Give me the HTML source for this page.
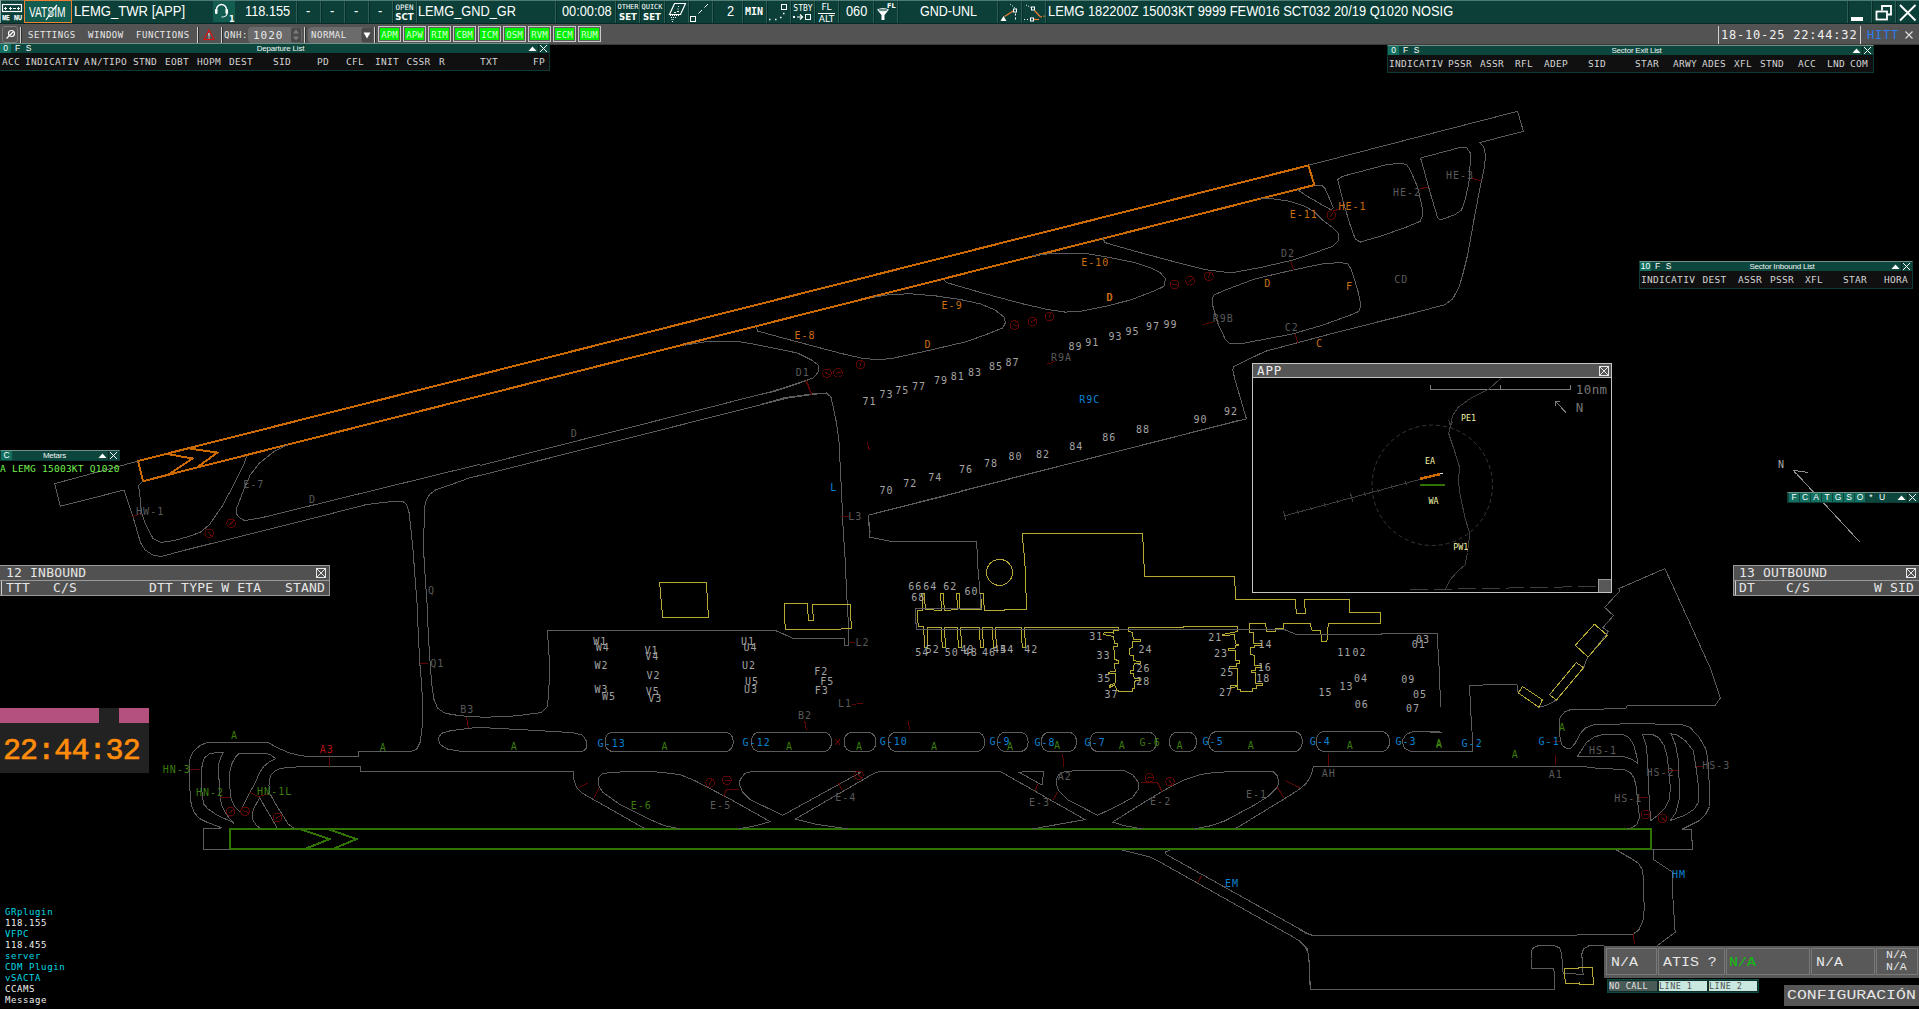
<!DOCTYPE html>
<html lang="es">
<head>
<meta charset="utf-8">
<title>LEMG_TWR</title>
<style>
*{box-sizing:border-box;margin:0;padding:0}
html,body{width:1919px;height:1009px;overflow:hidden;background:#000}
body{position:relative;font-family:"Liberation Sans",sans-serif;color:#fff}
.abs{position:absolute}
.mono{font-family:"DejaVu Sans Mono","Liberation Mono",monospace}
.lmono{font-family:"Liberation Mono",monospace}
#map{position:absolute;left:0;top:0;width:1919px;height:1009px}
#map text{font-family:"DejaVu Sans Mono","Liberation Mono",monospace;font-size:10px;letter-spacing:1px}
/* top bar */
#top{position:absolute;left:0;top:0;width:1919px;height:24px;background:#0b3f38;border-top:1px solid #4d7a72;border-bottom:1px solid #062a25}
#top .sep{position:absolute;top:0;width:2px;height:22px;border-left:1px solid #2c5f56;border-right:1px solid #072e29}
#top .t{position:absolute;top:1px;height:19px;line-height:19px;font-size:14px;transform-origin:0 50%;transform:scaleX(0.912);color:#fff;white-space:nowrap}
#top .s2{position:absolute;font-size:7.5px;line-height:9px;color:#fff;text-align:center;white-space:nowrap;font-family:"DejaVu Sans Mono",monospace}
#top .s2 b{font-family:"DejaVu Sans",sans-serif;font-size:8.6px;line-height:11px;display:block}
/* grey bar */
#bar{position:absolute;left:0;top:24px;width:1919px;height:21px;background:#535353;border-bottom:1px solid #3a3a3a}
#bar .m{position:absolute;top:5px;font-size:9px;line-height:13px;color:#e8e8e8;white-space:nowrap;letter-spacing:0.55px}
#bar .vs{position:absolute;top:3px;width:2px;height:16px;border-left:1px solid #d0d0d0;border-right:1px solid #2e2e2e}
.gb{position:absolute;top:2px;width:23px;height:16px;border:1px solid #c8c8c8;background:#606060;padding:1px}
.gb span{display:block;width:19px;height:12px;background:#00f000;color:#d8ffd8;font-size:9px;line-height:14px;text-align:center;font-family:"DejaVu Sans Mono",monospace}
/* list panels */
.lst{position:absolute;background:#101010;border:1px solid #0b3b34;border-top-color:#6f918a}
.lst .tb{position:absolute;left:0;top:0;right:0;height:9px;background:#0c463c}
.lst .tb i{position:absolute;top:0;font-style:normal;font-size:8.5px;line-height:9px;color:#fff;text-align:center;height:9px}
.lst .tb .ttl{left:34px;right:22px;text-align:center;font-size:8px;letter-spacing:-0.2px;color:#eef6f4}
.lst .hd{position:absolute;left:0;right:0;top:10px;height:15px;font-size:9.5px;letter-spacing:0.3px;line-height:15px;color:#d4d4d4;white-space:pre}
.lst .hd span{position:absolute;top:0}
.pnl{position:absolute;background:#515151;color:#e6e6e6;font-size:13px;letter-spacing:0.2px;white-space:pre}
</style>
</head>
<body>
<svg id="map" width="1919" height="1009" viewBox="0 0 1919 1009" shape-rendering="crispEdges" fill="none">
<polygon points="138,461 1308.3,165.5 1314.5,185 143,481.2" stroke="#cc6a00" stroke-width="2"/>
<polyline points="167.7,454.1 192.5,458.5 168.4,474.5" stroke="#cc6a00" stroke-width="2"/>
<polyline points="190.3,448.7 217.3,452.6 196.9,467.6" stroke="#cc6a00" stroke-width="2"/>
<polygon points="230,829 1651,829 1651,849 230,849" stroke="#2f7400" stroke-width="2"/>
<polyline points="138.1,461.1 54.6,483.7 60.4,506.2 123.9,490.1 127.5,500 132.7,516.1 137,530.7 140.7,543.1 145.1,549.9 152.4,554.8 161.1,556.6 185.9,549.9 320,516.5 365.7,504.7 383.2,502.5 393.4,501.5 402.9,501.5 406.6,504.4 409.2,513.2 410.9,529.2 413.1,551.1 415,576.9 417.2,605.1 418.2,632" stroke="#5c5c5c" stroke-width="1"/>
<polyline points="142.9,481.4 138.5,485.4 139.9,495.7 141.4,511.7 145.1,523.4 153.1,538.7 161.1,542.4 174.2,540.6 188.8,536.5 200.5,532.1 209.3,524.8 222.4,505.9 234.1,484 244.3,463.6 246.5,456.3" stroke="#5c5c5c" stroke-width="1"/>
<polyline points="288,444.6 273.5,451.9 258.9,463.6 250.1,475.2 244.3,488.4 237,507.3 236.2,513.2 239.2,517.5 244.3,520.5 259.2,518.3 479.9,464.3" stroke="#5c5c5c" stroke-width="1"/>
<polyline points="132.2,516.8 140.7,513.5" stroke="#600404" stroke-width="1"/>
<polyline points="480,465.5 772.7,391.3 790.2,385.5 805.2,380.8" stroke="#5c5c5c" stroke-width="1"/>
<polyline points="428.2,632 427.2,605.1 425.2,576.9 423.8,554 423.3,532.1 424.5,524.8 424.8,505.9 426.2,500 429.9,494.2 435.7,489.8 448.9,485.4 470.8,477.4 480,475.5 787.7,398 812.7,394.5 826.4,393 830.9,397 833.4,407.5 836.4,422.5 838.9,440 840.2,465 841.9,500.1 843.2,530.1 845.2,560.1 846.7,595.1 848.9,631.9" stroke="#5c5c5c" stroke-width="1"/>
<polyline points="805.2,380 811.4,393.8" stroke="#600404" stroke-width="1"/>
<polyline points="867.2,442.5 869.2,449.5" stroke="#600404" stroke-width="1"/>
<polyline points="842.2,516.3 849.7,516.3" stroke="#600404" stroke-width="1"/>
<polyline points="960,492.1 868.5,515.1 869.5,537.1 890.2,541.3 960,541.3" stroke="#5c5c5c" stroke-width="1"/>
<polygon points="659.6,582.1 706.4,582.1 708.4,617.1 662.6,617.1" stroke="#b6aa34" stroke-width="1"/>
<polygon points="784.4,603.4 807.7,603.4 808.2,620.1 813.2,620.1 812.7,604.4 850.2,604.4 851.4,628.9 785.2,629.6" stroke="#b6aa34" stroke-width="1"/>
<polygon points="1022,533.3 1142.6,533.3 1144.6,576.4 1234.6,576.4 1235.6,599.4 1295.2,599.4 1296.4,613.1 1305.2,613.1 1304.7,599.4 1349.5,599.4 1349.5,612.1 1380.2,612.1 1381,623.4 1380.5,623.5 1328.3,623.5 1326.9,641 1321.7,641 1320.7,630.8 1311.5,630 1310.4,623.5 1283.8,623.5 1283.5,628.3 1275.8,628.6 1275.3,631.2 1266.6,631.2 1265.6,623.5 1249.5,623.5 1249.5,632.2 1253.2,632.2 1253.6,643.2 1261.2,643.5 1261.2,645.4 1254.6,645.8 1254.3,647.5 1250.5,648 1250.5,654.8 1254.3,655.1 1254.9,665.3 1261.2,665.3 1261.2,667.2 1255.4,667.7 1255.1,670.2 1251.7,670.9 1252,672.6 1255.4,672.4 1255.8,683.7 1262.2,683.7 1262.2,685.5 1256.8,685.8 1256.4,688.4 1252.9,688.7 1252.4,691.3 1240.8,691.3 1240,689.6 1237.4,689.6 1237.1,686.9 1230.6,687.2 1230.6,685.5 1237.4,685.2 1237.1,668.3 1229.8,668.3 1229.8,666.5 1236.4,666.2 1236.4,663.6 1239.3,663.3 1239.3,660.7 1236,660.4 1235.4,650.2 1228.4,650.2 1228.4,648.3 1235.7,648 1236,645.4 1238.6,645.4 1238.6,644.3 1235.4,643.9 1234.5,634.1 1225.4,635.9 1222.5,635.6 1222.8,634.4 1234.2,632.2 1237.4,631.5 1237.4,626.4 1183.1,626.4 1183.1,627.4 1170,627.4 1128.3,627.4 1128.3,631.5 1132,632.2 1133.5,639.5 1140.5,640 1140.5,641.4 1133,641.4 1132.7,647.5 1129.4,648.3 1129.4,654.8 1133.2,655.6 1133.5,660.7 1140,661.4 1140.8,663.9 1134.2,663.6 1133.5,670.6 1130.5,670.9 1130.5,673.1 1133.5,673.1 1134.2,678.5 1139.3,678.9 1139.3,680.4 1134.9,681.1 1134.6,688.1 1132,688.4 1132,691.3 1118.9,691.3 1116.7,689.9 1114.5,684.8 1109.4,687.7 1110.1,685.2 1115.9,682.6 1115.7,673.8 1108.7,673.8 1108.7,672.1 1115.2,671.6 1114.5,663.6 1118.4,663.3 1118.1,660.7 1114.5,659.2 1113.8,646.1 1117.1,646.1 1117.4,643.9 1114.2,643.2 1113.8,636.2 1110.1,635.9 1103.5,634.4 1104.3,632.2 1113.3,633 1113.8,630.8 1118.6,630.3 1118.6,627.4 1024.5,627.4 1025.5,647.5 1022.3,647.5 1021.1,627.4 995.6,627.4 996.3,647.5 993.4,647.5 992.4,627.4 982.4,627.4 983.5,647.5 980.3,647.5 979.5,627.4 960.6,627.4 961.6,647.5 958.4,647.5 957.3,627.4 944.5,627.4 945.5,647.5 942.3,647.5 941.3,627.4 927,627.4 927,647.5 924.8,647.5 924.1,635.9 923.3,626.4 918.7,626.4 917.2,618.4 917.5,610.6 922.6,610.6 921.9,593.6 924.4,593.6 924.8,602.3 925.5,609.6 934,609.6 934.3,610.6 941.6,610.6 940.6,593.6 943.3,593.6 943.8,602.3 944.5,610.6 950.8,610.6 951.1,609.6 957.6,609.6 956.6,593.6 959.1,593.6 959.5,602.3 960.1,609.6 981.7,609.6 980.7,593.6 983.2,593.6 983.9,602.3 984.3,610.6 1004.8,610.6 1004.8,609.6 1026.6,609.6 1024.8,560" stroke="#b6aa34" stroke-width="1"/>
<polyline points="960,541.3 976.8,541.3 977.3,560 979.5,586.3 981,608.4 915.3,608.4 916.3,629.3 1180,629.3" stroke="#5c5c5c" stroke-width="1"/>
<polyline points="1170,629.3 1283.8,629.3 1296.2,634.4 1381.6,634.4 1382.3,633 1437,633 1437.7,643.2 1439.2,669.4 1440.7,706.9" stroke="#5c5c5c" stroke-width="1"/>
<polyline points="960,491.3 1246.4,418.8 1235.1,380" stroke="#5c5c5c" stroke-width="1"/>
<polyline points="685.1,345.1 705.1,341.9 737.6,341.4 755.1,344.4 780.2,349.4 797.7,353.1 810.2,359.4 810,358.8 818,365 818.8,371.3 813.8,377.6 797.5,383.8 775,391.3 760,394.6" stroke="#5c5c5c" stroke-width="1"/>
<polyline points="756.4,326.9 757.6,331.1 792.7,340.6 830.2,350.6 842.5,353.8 862.6,358.3 875.1,359.5 890.1,358.8 925.1,351.3 965.1,342 985.1,335 1002.6,328 1005.6,322.5 1003.9,317 995.1,310 980.1,303.8 960.1,299.5 935.1,295.8 910.1,293.8 890.1,294.5 872.6,297.5" stroke="#5c5c5c" stroke-width="1"/>
<polyline points="760,404.6 785,397.6 812.5,393.8 826.3,393.1" stroke="#5c5c5c" stroke-width="1"/>
<polyline points="806.3,380.1 811.8,394.6" stroke="#600404" stroke-width="1"/>
<polyline points="867.1,442.1 869.6,449.6" stroke="#600404" stroke-width="1"/>
<polyline points="870.1,531.9 868.3,515.1 1240,420.1" stroke="#5c5c5c" stroke-width="1"/>
<polyline points="943.8,280 946.3,282.5 985.1,293.8 1022.6,303.8 1047.6,309.5 1065.1,312.1 1080.1,311.4 1105.1,306.4 1130.1,300.1 1155.1,290.6 1163.9,286.3 1165.6,278.8 1160.1,272.6 1150.1,267.6 1135.1,262.6 1110.1,257.6 1085.1,253.3 1055,253.1 1032.5,255.6" stroke="#5c5c5c" stroke-width="1"/>
<polyline points="1102.6,237.6 1105.1,242.6 1135.1,251.3 1172.6,261.3 1205.1,269.6 1225.1,272.1 1235.1,272.1 1260.2,267.6 1292.7,260.1 1315.2,252.6 1332.7,246.3 1338.9,240.1 1338.9,233.8 1332.7,227.6 1322.7,220.1 1315.2,212.6 1305.2,206.3 1290.2,201.3 1272.7,198.8 1260.2,198.8" stroke="#5c5c5c" stroke-width="1"/>
<polyline points="1314.7,185 1321.4,185 1325.2,188.8 1330.2,200.1 1333.2,207.6 1331.4,210.1 1320.2,203.8 1305.2,195 1298.9,190.5 1297.7,188.8" stroke="#5c5c5c" stroke-width="1"/>
<polygon points="1337.7,179.5 1342.7,176.3 1385.2,165 1400.2,163 1406.5,164.5 1410.2,170 1417.7,187.5 1422.2,207.6 1422.7,215.1 1420.2,221.3 1405.2,227.6 1380.2,236.3 1360.2,242.1 1355.2,238.8 1350.2,225.1 1342.7,200.1" stroke="#5c5c5c" stroke-width="1"/>
<polygon points="1213.9,295.1 1225.1,290.1 1255.2,278.8 1292.7,270.1 1322.7,263.8 1340.2,262.6 1347.7,263.8 1351.5,270.1 1357.7,290.1 1361,305.1 1359,311.4 1350.2,315.1 1322.7,325.1 1292.7,333.9 1260.2,340.1 1240.1,343.9 1230.1,343.9 1225.1,338.9 1217.6,322.6 1212.6,305.1 1212.6,297.6" stroke="#5c5c5c" stroke-width="1"/>
<polyline points="1309.5,165 1517.6,111.3 1523.4,131.3 1480.1,142.5 1483.9,147.5 1485.6,156.3 1483.9,170 1480.1,187.5 1473.9,220.1 1467.6,255.1 1462.6,275.1 1458.9,287.6 1452.6,298.9 1445.1,304.6 1415.1,312.6 1340.1,331.4 1265,351.4 1234,366.3 1232.7,370 1235.1,380" stroke="#5c5c5c" stroke-width="1"/>
<polygon points="1420.6,158 1460.1,147.5 1466.4,147.5 1470.1,152.5 1470.1,165 1468.9,182.5 1465.1,200.1 1461.4,210.1 1455.1,214.6 1440.1,220.1 1437.6,217.6 1430.1,192.5" stroke="#5c5c5c" stroke-width="1"/>
<polyline points="1290.7,261.3 1293.9,270.1" stroke="#600404" stroke-width="1"/>
<polyline points="1295.2,333.9 1297.7,342.6" stroke="#600404" stroke-width="1"/>
<polyline points="1203.1,324.4 1213.1,321.9" stroke="#600404" stroke-width="1"/>
<polyline points="1332.7,211.3 1340.2,208.8" stroke="#600404" stroke-width="1"/>
<polyline points="1420.2,188.8 1427.7,187" stroke="#600404" stroke-width="1"/>
<polyline points="1469.6,178 1480.6,180.5" stroke="#600404" stroke-width="1"/>
<polyline points="1047.1,364.5 1055.2,361.3" stroke="#600404" stroke-width="1"/>
<polyline points="358.8,751.4 358.8,756.4 306.2,756.4 299.1,755.2 289.3,752.8 278.3,748.2 267.9,742.4 207.2,742.4 200.6,745.2 193,751.7 189.7,759.4 189.2,769.2 189.5,782.4 190.2,794.4 191.3,805.4 194.6,813 199.5,818.5 207.2,822.3 216,825.6 221.4,827.8" stroke="#5c5c5c" stroke-width="1"/>
<polyline points="380,771.7 360.4,771.7 360.4,766.5 305.7,766.5 290.4,767.3 280.5,768.4 275.1,770.9 271.2,774.7 269.4,780.2 269,785.7 269.8,793.3 275.1,803.2 282.7,815.2 288.2,824 294.2,828.6" stroke="#5c5c5c" stroke-width="1"/>
<polygon points="223.6,752.3 218.2,752.3 209.4,753.9 204.5,757.8 202.3,763.8 201.5,771.4 201.7,785.7 202.3,796.6 203.9,804.3 208.3,809.2 217.1,815.2 226.9,819.6 232.4,822.3 234,823.4 229.6,818.5 224.7,811.9 221.4,804.3 219.8,794.4 219.2,781.3 218.2,771.4 218.7,763.8 220.9,757.2" stroke="#5c5c5c" stroke-width="1"/>
<polygon points="275.6,758.5 270.7,755 265.2,753.2 239.5,753.2 235.7,756.7 231.8,763.8 229.6,772.5 229.3,780.2 230.2,791.1 231.3,799.9 234.6,806.5 240,811.9 242.2,807.5 245.5,801 249.9,792.2 255.4,782.4 259.7,772.5 263.6,766.5 269,762.1" stroke="#5c5c5c" stroke-width="1"/>
<polyline points="260.8,828.6 256.5,825.6 252.6,819.6 252.1,813 254.3,807.5 259.7,797.7 265.2,807.5 271.8,818.5 277.2,828.3" stroke="#5c5c5c" stroke-width="1"/>
<polyline points="221.4,828.4 203.4,828.4 203.4,849.6 229.6,849.6" stroke="#5c5c5c" stroke-width="1"/>
<polyline points="189.7,769.5 199.8,769.5" stroke="#600404" stroke-width="1"/>
<polyline points="220.1,797.5 230,797.5" stroke="#600404" stroke-width="1"/>
<polyline points="249,792 258.6,796.9 269,793.5" stroke="#600404" stroke-width="1"/>
<polyline points="329.6,757.2 329.6,766.8" stroke="#600404" stroke-width="1"/>
<polyline points="418.2,632 419.7,662 421.5,682 422.7,704.5 422.2,727 420.2,742.1 416.5,749.6 410.2,751.6 358.9,751.6" stroke="#5c5c5c" stroke-width="1"/>
<polyline points="428.2,632 429.7,657 431.5,682 434,699.5 437.7,708.3 445.2,713.3 460.2,715.8 480,717" stroke="#5c5c5c" stroke-width="1"/>
<polyline points="480,727 450.2,730.8 441.5,733.3 438.2,738.3 440.2,744.6 447.7,749.1 462.7,751.6 480,751.6" stroke="#5c5c5c" stroke-width="1"/>
<polyline points="480,771.3 360.7,771.3" stroke="#5c5c5c" stroke-width="1"/>
<polyline points="420.2,663.3 428.2,663.3" stroke="#600404" stroke-width="1"/>
<polyline points="466.5,717 468.5,728.3" stroke="#600404" stroke-width="1"/>
<polyline points="301.4,829.6 329.7,839.1 305.7,848.6" stroke="#2f7400" stroke-width="2"/>
<polyline points="329.7,829.6 356.4,839.1 333.9,848.6" stroke="#2f7400" stroke-width="2"/>
<polyline points="480,717.5 517.5,715.8 541.3,712.5 547,707 548.8,694.5 549.5,662 547.5,632 547.5,630 660.1,630 775.2,630.5 780.2,632.5 792.7,638.3 844.7,638.3 844.7,645 848.9,645 848.9,638.3 848.2,632" stroke="#5c5c5c" stroke-width="1"/>
<polyline points="849.7,642.5 855.2,642.5" stroke="#600404" stroke-width="1"/>
<polyline points="480,727.5 530,730.1 572.5,732.6 582.6,735.1 586.3,740.8 586.3,748.3 582.6,751.6 480,751.6" stroke="#5c5c5c" stroke-width="1"/>
<polygon points="724.5,732 726.7,732.3 728.8,733.2 730.6,734.5 731.9,736.3 732.8,738.4 733.1,740.6 733.1,743.1 732.8,745.3 731.9,747.4 730.6,749.2 728.8,750.5 726.7,751.4 724.5,751.7 613.7,751.7 611.5,751.4 609.4,750.5 607.6,749.2 606.3,747.4 605.4,745.3 605.1,743.1 605.1,740.6 605.4,738.4 606.3,736.3 607.6,734.5 609.4,733.2 611.5,732.3 613.7,732" stroke="#5c5c5c" stroke-width="1"/>
<polygon points="822.8,732 825,732.3 827.1,733.2 828.9,734.5 830.2,736.3 831.1,738.4 831.4,740.6 831.4,743.1 831.1,745.3 830.2,747.4 828.9,749.2 827.1,750.5 825,751.4 822.8,751.7 760,751.7 757.8,751.4 755.7,750.5 753.9,749.2 752.6,747.4 751.7,745.3 751.4,743.1 751.4,740.6 751.7,738.4 752.6,736.3 753.9,734.5 755.7,733.2 757.8,732.3 760,732" stroke="#5c5c5c" stroke-width="1"/>
<polygon points="867.2,732.1 869.4,732.4 871.5,733.3 873.3,734.6 874.6,736.4 875.5,738.5 875.8,740.7 875.8,743.1 875.5,745.3 874.6,747.4 873.3,749.2 871.5,750.5 869.4,751.4 867.2,751.7 852.8,751.7 850.6,751.4 848.5,750.5 846.7,749.2 845.4,747.4 844.5,745.3 844.2,743.1 844.2,740.7 844.5,738.5 845.4,736.4 846.7,734.6 848.5,733.3 850.6,732.4 852.8,732.1" stroke="#5c5c5c" stroke-width="1"/>
<polygon points="975.9,732 978.1,732.3 980.2,733.2 982,734.5 983.3,736.3 984.2,738.4 984.5,740.6 984.5,743.1 984.2,745.3 983.3,747.4 982,749.2 980.2,750.5 978.1,751.4 975.9,751.7 896.8,751.7 894.6,751.4 892.5,750.5 890.7,749.2 889.4,747.4 888.5,745.3 888.2,743.1 888.2,740.6 888.5,738.4 889.4,736.3 890.7,734.5 892.5,733.2 894.6,732.3 896.8,732" stroke="#5c5c5c" stroke-width="1"/>
<polygon points="1019.4,732 1021.6,732.3 1023.7,733.2 1025.5,734.5 1026.8,736.3 1027.7,738.4 1028,740.6 1028,743.1 1027.7,745.3 1026.8,747.4 1025.5,749.2 1023.7,750.5 1021.6,751.4 1019.4,751.7 1006.1,751.7 1003.9,751.4 1001.8,750.5 1000,749.2 998.7,747.4 997.8,745.3 997.5,743.1 997.5,740.6 997.8,738.4 998.7,736.3 1000,734.5 1001.8,733.2 1003.9,732.3 1006.1,732" stroke="#5c5c5c" stroke-width="1"/>
<polygon points="1067.7,732 1069.9,732.3 1072,733.2 1073.8,734.5 1075.1,736.3 1076,738.4 1076.3,740.6 1076.3,743.1 1076,745.3 1075.1,747.4 1073.8,749.2 1072,750.5 1069.9,751.4 1067.7,751.7 1049.9,751.7 1047.7,751.4 1045.6,750.5 1043.8,749.2 1042.5,747.4 1041.6,745.3 1041.3,743.1 1041.3,740.6 1041.6,738.4 1042.5,736.3 1043.8,734.5 1045.6,733.2 1047.7,732.3 1049.9,732" stroke="#5c5c5c" stroke-width="1"/>
<polygon points="1147.7,732 1149.9,732.3 1152,733.2 1153.8,734.5 1155.1,736.3 1156,738.4 1156.3,740.6 1156.3,743.1 1156,745.3 1155.1,747.4 1153.8,749.2 1152,750.5 1149.9,751.4 1147.7,751.7 1098.6,751.7 1096.4,751.4 1094.3,750.5 1092.5,749.2 1091.2,747.4 1090.3,745.3 1090,743.1 1090,740.6 1090.3,738.4 1091.2,736.3 1092.5,734.5 1094.3,733.2 1096.4,732.3 1098.6,732" stroke="#5c5c5c" stroke-width="1"/>
<polygon points="1187.7,732 1189.9,732.3 1192,733.2 1193.8,734.5 1195.1,736.3 1196,738.4 1196.3,740.6 1196.3,743.1 1196,745.3 1195.1,747.4 1193.8,749.2 1192,750.5 1189.9,751.4 1187.7,751.7 1178.2,751.7 1176,751.4 1173.9,750.5 1172.1,749.2 1170.8,747.4 1169.9,745.3 1169.6,743.1 1169.6,740.6 1169.9,738.4 1170.8,736.3 1172.1,734.5 1173.9,733.2 1176,732.3 1178.2,732" stroke="#5c5c5c" stroke-width="1"/>
<polygon points="1293.5,731.4 1295.7,731.7 1297.8,732.6 1299.6,733.9 1300.9,735.7 1301.8,737.8 1302.1,740 1302.1,743.1 1301.8,745.3 1300.9,747.4 1299.6,749.2 1297.8,750.5 1295.7,751.4 1293.5,751.7 1217.4,751.7 1215.2,751.4 1213.1,750.5 1211.3,749.2 1210,747.4 1209.1,745.3 1208.8,743.1 1208.8,740 1209.1,737.8 1210,735.7 1211.3,733.9 1213.1,732.6 1215.2,731.7 1217.4,731.4" stroke="#5c5c5c" stroke-width="1"/>
<polygon points="1380.8,731.4 1383,731.7 1385.1,732.6 1386.9,733.9 1388.2,735.7 1389.1,737.8 1389.4,740 1389.4,743.1 1389.1,745.3 1388.2,747.4 1386.9,749.2 1385.1,750.5 1383,751.4 1380.8,751.7 1325,751.7 1322.8,751.4 1320.7,750.5 1318.9,749.2 1317.6,747.4 1316.7,745.3 1316.4,743.1 1316.4,740 1316.7,737.8 1317.6,735.7 1318.9,733.9 1320.7,732.6 1322.8,731.7 1325,731.4" stroke="#5c5c5c" stroke-width="1"/>
<polyline points="480,771.3 573.3,771.3 573.8,779.6 576.3,787.1 582.6,793.3 645.1,828.9" stroke="#5c5c5c" stroke-width="1"/>
<polyline points="680.1,828.9 665.1,825.9 650.1,819.6 620.1,804.6 602.6,792.1 598.1,784.6 598.8,777.1 602.6,773.3 630.1,771.3 660.1,772.1 680.1,774.6 695.1,780.8 730.1,799.1 770.2,821.6 755.1,825.9 737.6,828.9" stroke="#5c5c5c" stroke-width="1"/>
<polygon points="740.1,779.6 745.1,773.3 752.6,771.3 855.2,771.3 860.2,772.6 782.7,815.3 750.1,799.6 742.6,792.1 739.6,784.6" stroke="#5c5c5c" stroke-width="1"/>
<polyline points="1032.5,828.9 1085.1,819.6 1000,771.3 960,771.3 880.2,771.3 874,773.3 795.2,819.1 815.2,824.1 847.7,828.9" stroke="#5c5c5c" stroke-width="1"/>
<polyline points="578.8,787.6 587.6,783.3" stroke="#600404" stroke-width="1"/>
<polyline points="593.8,798.3 598.8,788.3" stroke="#600404" stroke-width="1"/>
<polyline points="723.9,795.8 726.4,789.6 738.9,789.1" stroke="#600404" stroke-width="1"/>
<polyline points="838.9,783.3 841.9,789.6" stroke="#600404" stroke-width="1"/>
<polyline points="804.7,720.8 806.4,730.1" stroke="#600404" stroke-width="1"/>
<polyline points="908.2,720.8 909.7,730.1" stroke="#600404" stroke-width="1"/>
<polyline points="852.2,704.5 862.7,703.3" stroke="#600404" stroke-width="1"/>
<polyline points="835.2,739.1 840.2,744.6" stroke="#600404" stroke-width="1"/>
<polyline points="840.2,739.1 835.2,744.6" stroke="#600404" stroke-width="1"/>
<polygon points="1018.8,772.1 1043.8,771.3 1042,785.1" stroke="#5c5c5c" stroke-width="1"/>
<polygon points="1056.3,779.6 1058.8,774.6 1065.1,771.3 1092.6,770.1 1122.6,770.1 1132.6,774.6 1138.1,782.1 1138.1,789.6 1132.6,797.6 1115.1,807.1 1097.6,815.3 1067.6,799.6 1058.8,790.8 1056.3,784.6" stroke="#5c5c5c" stroke-width="1"/>
<polyline points="1142.6,828.9 1125.1,825.9 1112.6,822.1 1147.6,800.1 1167.6,788.3 1185.1,779.6 1200.1,774.6 1217.6,772.1 1272.7,771.3 1277.2,775.8 1278.9,782.1 1277.2,787.1 1268.9,795.8 1255.2,804.6 1225.1,820.8 1210.1,825.9 1193.9,828.9" stroke="#5c5c5c" stroke-width="1"/>
<polyline points="1440,766.3 1313.4,766.3 1311.4,774.6 1306.4,783.3 1298.9,789.6 1285.2,798.3 1235.1,828.9" stroke="#5c5c5c" stroke-width="1"/>
<polyline points="1062.6,753.8 1063.8,767.1" stroke="#600404" stroke-width="1"/>
<polyline points="1035,790.8 1038,783.8" stroke="#600404" stroke-width="1"/>
<polyline points="1053,800.1 1057.6,792.1" stroke="#600404" stroke-width="1"/>
<polyline points="1140.6,782.1 1157.6,782.6 1162.1,791.6" stroke="#600404" stroke-width="1"/>
<polyline points="1277.2,787.1 1283.9,797.6" stroke="#600404" stroke-width="1"/>
<polyline points="1285.2,780.8 1299.7,787.6" stroke="#600404" stroke-width="1"/>
<polyline points="1328.2,753.8 1328.2,766.3" stroke="#600404" stroke-width="1"/>
<polyline points="1197.1,883.9 1201.4,875.9" stroke="#600404" stroke-width="1"/>
<polyline points="1122.6,850.1 1135.1,853.4 1150.1,857.1 1160.1,862.1 1292.7,936.7 1301.4,942.2 1307.2,948.4 1308.9,957.2 1310.2,989.7" stroke="#5c5c5c" stroke-width="1"/>
<polyline points="1170.1,850.1 1165.1,852.1 1166.4,854.6 1308.9,934.2 1312.7,935.4" stroke="#5c5c5c" stroke-width="1"/>
<polyline points="1430,751.4 1472.6,751.4 1472,731.3 1471,715.7 1470.4,700 1470.4,700.9 1469.1,685.3 1492.6,684.8 1516.9,684.2 1518,691.5 1519.2,692.3" stroke="#5c5c5c" stroke-width="1"/>
<polyline points="1538.8,707.2 1545.9,705.6 1553.7,701.7 1556.8,699.4 1583.4,668 1587.4,657.9 1588.9,656.3 1606.9,633.6 1608.5,631.7 1603,627.6 1613.5,615.6 1604.6,607.4 1619.8,591 1618.7,588.7 1664.9,568.6 1710.3,668 1720.4,697.8 1715,705.6 1627.3,705.6 1625.4,708.7 1570.9,709.5 1564.7,711.9 1560.7,716.6 1559.2,720.4 1559.6,731.3 1560.3,740.7 1562.3,745.4 1566.2,748.2 1570.9,748.2 1574.8,743.8 1580.3,733.7 1585,728.2 1594.4,724.3 1638.2,723.8 1680.5,724.3 1689.9,727.4 1699.3,737.6 1705.6,748.5 1707.9,759.5 1708.7,775.2 1710,793.9 1709.5,806.5 1705.6,814.3 1699.3,820.6 1689.9,825.3 1682.1,829.2 1691.2,829.2 1691.8,837.8 1692.7,849.2 1651.6,849.2" stroke="#5c5c5c" stroke-width="1"/>
<polygon points="1522.4,686.5 1542.4,699.8 1538.8,707.2 1518.5,693.1" stroke="#b6aa34" stroke-width="1"/>
<polygon points="1576.4,662.6 1583.4,667.7 1556.5,700.1 1549.5,694.7" stroke="#b6aa34" stroke-width="1"/>
<polygon points="1594.4,624.2 1607.2,635.2 1588.1,657.1 1575.3,645.3" stroke="#b6aa34" stroke-width="1"/>
<polyline points="1430,732.4 1441.7,732.4" stroke="#5c5c5c" stroke-width="1"/>
<polyline points="1430,766.5 1583.4,766.5 1596,768.1 1611.6,768.9 1624.2,769.7 1630.4,772.8 1634.3,778.3 1636.4,787.7 1637.5,800.2 1639,812.7 1639,819 1636.7,824.5 1632,827.6 1626.5,829.2" stroke="#5c5c5c" stroke-width="1"/>
<polygon points="1577.5,756.4 1586.6,742.3 1594.4,736.8 1603.8,734.4 1622.6,734.4 1628.9,737.6 1633.5,744.6 1636.4,754.8 1637.9,763.4 1632,759.5 1624.2,756.7 1610.1,756.1" stroke="#5c5c5c" stroke-width="1"/>
<polygon points="1642.6,734.4 1652.3,734.4 1658.6,737.6 1664.1,745.4 1667.2,756.4 1668.8,770.5 1670.3,787.7 1669.6,798.6 1664.9,808 1657,815.9 1650.8,820.6 1649.2,800.2 1648.4,778.3 1647.6,759.5 1646.1,745.4" stroke="#5c5c5c" stroke-width="1"/>
<polygon points="1671.1,733.7 1677.4,735.2 1685.2,740.7 1693,750.1 1695.4,762.6 1697,775.2 1699,790.8 1698.5,801.8 1694.6,808.8 1685.2,815.1 1670.3,820.6 1675.8,812.7 1679,800.2 1679,778.3 1678.2,759.5 1675.8,745.4" stroke="#5c5c5c" stroke-width="1"/>
<polyline points="1552.9,741.5 1560.3,741.5" stroke="#600404" stroke-width="1"/>
<polyline points="1555.3,755.1 1555.3,764.7" stroke="#600404" stroke-width="1"/>
<polyline points="1668,770.8 1677.7,770.8" stroke="#600404" stroke-width="1"/>
<polyline points="1696.2,766.5 1703.2,766.5" stroke="#600404" stroke-width="1"/>
<polyline points="1638.2,797.5 1648.4,797.5" stroke="#600404" stroke-width="1"/>
<polyline points="1440,731.3 1414,731.3 1406.5,734.1 1402.7,739.6 1402.7,743.3 1404.7,748.3 1411.5,751.6 1440,751.6" stroke="#5c5c5c" stroke-width="1"/>
<polyline points="1300,929.8 1306.3,933.4 1312.5,935.5 1530.3,935.5 1531.4,935 1577.2,935 1578.3,934.4 1632.5,934.4 1638.7,930.3 1642.9,920.9 1644.3,908.4 1643.5,891.7 1642.9,870.8 1638.7,863.5 1629.3,857.3 1616.8,850 1628.9,857.4 1616.3,849.8" stroke="#5c5c5c" stroke-width="1"/>
<polyline points="1653.1,849.8 1653.1,857.7 1653.3,859.4 1672.1,871.9 1673.1,902.1 1675.2,932.3 1657.5,945.5" stroke="#5c5c5c" stroke-width="1"/>
<polyline points="1300,941.7 1305.2,946.9 1308.3,953.2 1309.4,966.7 1310.4,989.2 1554.7,989.2 1553.9,968.4 1531.8,968.4 1531,958.4 1531,952.1 1533.5,947.6 1538.7,945.5 1554.3,945.5 1559.5,948 1561.6,953.2 1563.1,973 1583.1,974.6 1581.8,954.2 1583.5,949 1588.7,945.9 1604.3,945.5" stroke="#5c5c5c" stroke-width="1"/>
<polygon points="1564.3,968.4 1578.3,968.4 1578.3,967.4 1592.4,967.4 1593.5,984.4 1579.3,984.4 1579.3,983 1565.3,983.4" stroke="#b6aa34" stroke-width="1"/>
<polyline points="1633.1,933.4 1634.5,943.8" stroke="#600404" stroke-width="1"/>
<polyline points="1859.6,541.8 1793.4,470.4 1807.6,472.4" stroke="#909090" stroke-width="1"/>
<polyline points="1793.4,470.4 1796.6,474.2" stroke="#909090" stroke-width="1"/>
<circle cx="209.2" cy="533.3" r="4.3" stroke="#600404"/><line x1="208.0" y1="531.8" x2="211.7" y2="536.3" stroke="#600404"/>
<circle cx="231.1" cy="523.4" r="4.3" stroke="#600404"/><line x1="229.7" y1="524.8" x2="233.8" y2="520.7" stroke="#600404"/>
<circle cx="1331.4" cy="215.1" r="4.3" stroke="#600404"/><line x1="1330.4" y1="216.8" x2="1333.3" y2="211.7" stroke="#600404"/>
<circle cx="1208.9" cy="276.3" r="4.3" stroke="#600404"/><line x1="1208.2" y1="278.1" x2="1210.2" y2="272.7" stroke="#600404"/>
<circle cx="1190.1" cy="280.8" r="4.3" stroke="#600404"/><line x1="1188.5" y1="281.9" x2="1193.3" y2="278.6" stroke="#600404"/>
<circle cx="1174.4" cy="284.6" r="4.3" stroke="#600404"/><line x1="1172.5" y1="284.3" x2="1178.2" y2="285.3" stroke="#600404"/>
<circle cx="1049.5" cy="316.4" r="4.3" stroke="#600404"/><line x1="1048.8" y1="318.2" x2="1050.8" y2="312.8" stroke="#600404"/>
<circle cx="1032.5" cy="321.4" r="4.3" stroke="#600404"/><line x1="1030.9" y1="322.5" x2="1035.7" y2="319.2" stroke="#600404"/>
<circle cx="1014.5" cy="325.1" r="4.3" stroke="#600404"/><line x1="1012.6" y1="324.8" x2="1018.3" y2="325.8" stroke="#600404"/>
<circle cx="860.6" cy="364.5" r="4.3" stroke="#600404"/><line x1="859.9" y1="366.3" x2="861.9" y2="360.9" stroke="#600404"/>
<circle cx="827" cy="373.3" r="4.3" stroke="#600404"/><line x1="825.3" y1="372.3" x2="830.4" y2="375.2" stroke="#600404"/>
<circle cx="838" cy="372.8" r="4.3" stroke="#600404"/><line x1="836.1" y1="373.3" x2="841.7" y2="371.8" stroke="#600404"/>
<circle cx="230.5" cy="811.7" r="4.3" stroke="#600404"/><line x1="228.9" y1="812.8" x2="233.7" y2="809.5" stroke="#600404"/>
<circle cx="245" cy="811.4" r="4.3" stroke="#600404"/><line x1="243.2" y1="810.7" x2="248.6" y2="812.7" stroke="#600404"/>
<circle cx="277.5" cy="817.4" r="4.3" stroke="#600404"/><line x1="275.8" y1="818.4" x2="280.9" y2="815.5" stroke="#600404"/>
<circle cx="710.1" cy="782.8" r="4.3" stroke="#600404"/><line x1="709.1" y1="784.5" x2="712.0" y2="779.4" stroke="#600404"/>
<circle cx="726.9" cy="780.3" r="4.3" stroke="#600404"/><line x1="725.0" y1="780.3" x2="730.8" y2="780.3" stroke="#600404"/>
<circle cx="858.9" cy="775.3" r="4.3" stroke="#600404"/><line x1="857.5" y1="773.9" x2="861.6" y2="778.0" stroke="#600404"/>
<circle cx="1149.3" cy="777.8" r="4.3" stroke="#600404"/><line x1="1147.4" y1="778.1" x2="1153.1" y2="777.1" stroke="#600404"/>
<circle cx="1170.1" cy="781.6" r="4.3" stroke="#600404"/><line x1="1169.1" y1="779.9" x2="1172.0" y2="785.0" stroke="#600404"/>
<circle cx="1645.3" cy="814.6" r="4.3" stroke="#600404"/><line x1="1643.4" y1="814.6" x2="1649.2" y2="814.6" stroke="#600404"/>
<circle cx="1662.5" cy="818.2" r="4.3" stroke="#600404"/><line x1="1661.0" y1="817.0" x2="1665.5" y2="820.7" stroke="#600404"/>
<circle cx="999.6" cy="572.4" r="13" stroke="#b6aa34"/>
<text x="136.1" y="514.9" fill="#5a5a5a">HW-1</text>
<text x="243.3" y="488.1" fill="#5a5a5a">E-7</text>
<text x="309.1" y="502.5" fill="#5a5a5a">D</text>
<text x="794.5" y="338.8" fill="#cc6f10">E-8</text>
<text x="941.6" y="309.3" fill="#cc6f10">E-9</text>
<text x="924.6" y="348" fill="#cc6f10">D</text>
<text x="1106.7" y="300.8" fill="#cc6f10">D</text>
<text x="795.8" y="376.3" fill="#5a5a5a">D1</text>
<text x="1050.9" y="361.3" fill="#5a5a5a">R9A</text>
<text x="1212.7" y="322" fill="#5a5a5a">R9B</text>
<text x="848.3" y="519.6" fill="#5a5a5a">L3</text>
<text x="1079.2" y="403.1" fill="#0a82d2">R9C</text>
<text x="830.3" y="490.9" fill="#0a82d2">L</text>
<text x="862.6" y="405.1" fill="#a4a4a4">71</text>
<text x="879.6" y="397.6" fill="#a4a4a4">73</text>
<text x="895.3" y="393.8" fill="#a4a4a4">75</text>
<text x="912.1" y="390.1" fill="#a4a4a4">77</text>
<text x="934.1" y="383.8" fill="#a4a4a4">79</text>
<text x="950.8" y="380.1" fill="#a4a4a4">81</text>
<text x="967.9" y="376.3" fill="#a4a4a4">83</text>
<text x="989.1" y="370" fill="#a4a4a4">85</text>
<text x="1005.4" y="366.3" fill="#a4a4a4">87</text>
<text x="1068.4" y="350" fill="#a4a4a4">89</text>
<text x="1085.2" y="345.8" fill="#a4a4a4">91</text>
<text x="1108.4" y="340" fill="#a4a4a4">93</text>
<text x="1125.4" y="335" fill="#a4a4a4">95</text>
<text x="1146" y="330" fill="#a4a4a4">97</text>
<text x="1163.5" y="328.3" fill="#a4a4a4">99</text>
<text x="879.6" y="493.9" fill="#a4a4a4">70</text>
<text x="903.3" y="486.9" fill="#a4a4a4">72</text>
<text x="928.3" y="481.4" fill="#a4a4a4">74</text>
<text x="959.1" y="472.6" fill="#a4a4a4">76</text>
<text x="984.1" y="467.1" fill="#a4a4a4">78</text>
<text x="1008.4" y="460.1" fill="#a4a4a4">80</text>
<text x="1035.9" y="457.6" fill="#a4a4a4">82</text>
<text x="1069.2" y="449.6" fill="#a4a4a4">84</text>
<text x="1102.2" y="440.8" fill="#a4a4a4">86</text>
<text x="1135.9" y="433.1" fill="#a4a4a4">88</text>
<text x="1193.5" y="423.1" fill="#a4a4a4">90</text>
<text x="1224" y="415.1" fill="#a4a4a4">92</text>
<text x="1081.3" y="266.3" fill="#cc6f10">E-10</text>
<text x="1106.3" y="300.9" fill="#cc6f10">D</text>
<text x="1289.7" y="218.1" fill="#cc6f10">E-11</text>
<text x="1338.4" y="210.1" fill="#cc6f10">HE-1</text>
<text x="1264.2" y="287.1" fill="#cc6f10">D</text>
<text x="1346" y="289.6" fill="#cc6f10">F</text>
<text x="1315.9" y="347.1" fill="#cc6f10">C</text>
<text x="1280.9" y="257.1" fill="#5a5a5a">D2</text>
<text x="1394.2" y="283.1" fill="#5a5a5a">CD</text>
<text x="1393" y="196.3" fill="#5a5a5a">HE-2</text>
<text x="1284.7" y="330.9" fill="#5a5a5a">C2</text>
<text x="1445.9" y="179.3" fill="#5a5a5a">HE-3</text>
<text x="570.8" y="437" fill="#5a5a5a">D</text>
<text x="908.3" y="590.2" fill="#a4a4a4">66</text>
<text x="923.3" y="590.2" fill="#a4a4a4">64</text>
<text x="943.3" y="589.6" fill="#a4a4a4">62</text>
<text x="964.4" y="594.6" fill="#a4a4a4">60</text>
<text x="911.2" y="600.6" fill="#a4a4a4">68</text>
<text x="915.3" y="655.6" fill="#a4a4a4">54</text>
<text x="925.8" y="653.4" fill="#a4a4a4">52</text>
<text x="944.7" y="656.3" fill="#a4a4a4">50</text>
<text x="960.5" y="652.9" fill="#a4a4a4">49</text>
<text x="963.7" y="656.3" fill="#a4a4a4">48</text>
<text x="981.9" y="656.3" fill="#a4a4a4">46</text>
<text x="992.9" y="652.7" fill="#a4a4a4">45</text>
<text x="1000.2" y="653.4" fill="#a4a4a4">44</text>
<text x="1024.3" y="653.4" fill="#a4a4a4">42</text>
<text x="1089.2" y="639.5" fill="#a4a4a4">31</text>
<text x="1096.5" y="658.5" fill="#a4a4a4">33</text>
<text x="1097.2" y="682.3" fill="#a4a4a4">35</text>
<text x="1104.5" y="698.3" fill="#a4a4a4">37</text>
<text x="1138.4" y="652.7" fill="#a4a4a4">24</text>
<text x="1136.6" y="671.6" fill="#a4a4a4">26</text>
<text x="1136.2" y="684.5" fill="#a4a4a4">28</text>
<text x="1208.2" y="640.7" fill="#a4a4a4">21</text>
<text x="1214" y="656.7" fill="#a4a4a4">23</text>
<text x="1220.3" y="675.7" fill="#a4a4a4">25</text>
<text x="1219.1" y="695.7" fill="#a4a4a4">27</text>
<text x="1258.5" y="647.5" fill="#a4a4a4">14</text>
<text x="1257.8" y="670.9" fill="#a4a4a4">16</text>
<text x="1256.3" y="682.3" fill="#a4a4a4">18</text>
<text x="1337.3" y="655.6" fill="#a4a4a4">11</text>
<text x="1352.6" y="655.6" fill="#a4a4a4">02</text>
<text x="1416.1" y="643.2" fill="#a4a4a4">03</text>
<text x="1411.7" y="647.5" fill="#a4a4a4">01</text>
<text x="1354.1" y="682.3" fill="#a4a4a4">04</text>
<text x="1401.2" y="682.6" fill="#a4a4a4">09</text>
<text x="1339.5" y="690.3" fill="#a4a4a4">13</text>
<text x="1318.6" y="696.4" fill="#a4a4a4">15</text>
<text x="1412.9" y="697.6" fill="#a4a4a4">05</text>
<text x="1354.7" y="707.5" fill="#a4a4a4">06</text>
<text x="1406" y="711.5" fill="#a4a4a4">07</text>
<text x="593.3" y="645" fill="#a4a4a4">W1</text>
<text x="595.8" y="650.8" fill="#a4a4a4">W4</text>
<text x="594.6" y="668.8" fill="#a4a4a4">W2</text>
<text x="594.6" y="692.8" fill="#a4a4a4">W3</text>
<text x="602.1" y="700" fill="#a4a4a4">W5</text>
<text x="644.6" y="654" fill="#a4a4a4">V1</text>
<text x="645.3" y="660.3" fill="#a4a4a4">V4</text>
<text x="646.6" y="679" fill="#a4a4a4">V2</text>
<text x="645.8" y="694.5" fill="#a4a4a4">V5</text>
<text x="648.3" y="701.5" fill="#a4a4a4">V3</text>
<text x="740.9" y="645" fill="#a4a4a4">U1</text>
<text x="743.4" y="650.8" fill="#a4a4a4">U4</text>
<text x="742.1" y="668.8" fill="#a4a4a4">U2</text>
<text x="745.1" y="684.5" fill="#a4a4a4">U5</text>
<text x="744.1" y="692.8" fill="#a4a4a4">U3</text>
<text x="814.2" y="675" fill="#a4a4a4">F2</text>
<text x="820.2" y="684.5" fill="#a4a4a4">F5</text>
<text x="814.7" y="693.8" fill="#a4a4a4">F3</text>
<text x="855.4" y="645.8" fill="#5a5a5a">L2</text>
<text x="837.9" y="707" fill="#5a5a5a">L1</text>
<text x="797.9" y="718.8" fill="#5a5a5a">B2</text>
<text x="710.1" y="808.8" fill="#5a5a5a">E-5</text>
<text x="835.2" y="800.8" fill="#5a5a5a">E-4</text>
<text x="597.6" y="746.6" fill="#0a82d2">G-13</text>
<text x="742.6" y="745.8" fill="#0a82d2">G-12</text>
<text x="879.7" y="745.1" fill="#0a82d2">G-10</text>
<text x="510.8" y="749.6" fill="#3c7c0c">A</text>
<text x="661.6" y="750.3" fill="#3c7c0c">A</text>
<text x="785.9" y="749.6" fill="#3c7c0c">A</text>
<text x="855.9" y="749.6" fill="#3c7c0c">A</text>
<text x="931" y="750.3" fill="#3c7c0c">A</text>
<text x="630.8" y="808.8" fill="#3c7c0c">E-6</text>
<text x="989.5" y="745.1" fill="#0a82d2">G-9</text>
<text x="1034.5" y="745.8" fill="#0a82d2">G-8</text>
<text x="1084.6" y="745.8" fill="#0a82d2">G-7</text>
<text x="1202.6" y="745.1" fill="#0a82d2">G-5</text>
<text x="1309.7" y="745.1" fill="#0a82d2">G-4</text>
<text x="1395.5" y="745.1" fill="#0a82d2">G-3</text>
<text x="1225.1" y="886.9" fill="#0a82d2">EM</text>
<text x="1007" y="749.6" fill="#3c7c0c">A</text>
<text x="1054" y="749.1" fill="#3c7c0c">A</text>
<text x="1118.8" y="749.1" fill="#3c7c0c">A</text>
<text x="1139.6" y="745.8" fill="#3c7c0c">G-6</text>
<text x="1176.6" y="749.1" fill="#3c7c0c">A</text>
<text x="1247.7" y="749.1" fill="#3c7c0c">A</text>
<text x="1346.7" y="749.1" fill="#3c7c0c">A</text>
<text x="1436" y="747.8" fill="#3c7c0c">A</text>
<text x="1057.8" y="780.3" fill="#5a5a5a">A2</text>
<text x="1029" y="805.8" fill="#5a5a5a">E-3</text>
<text x="1150.1" y="805.3" fill="#5a5a5a">E-2</text>
<text x="1245.9" y="798.3" fill="#5a5a5a">E-1</text>
<text x="1321.7" y="777.1" fill="#5a5a5a">AH</text>
<text x="1435.8" y="747.4" fill="#3c7c0c">A</text>
<text x="1511.7" y="758.4" fill="#3c7c0c">A</text>
<text x="1559.1" y="730.8" fill="#3c7c0c">A</text>
<text x="1461.6" y="746.7" fill="#0a82d2">G-2</text>
<text x="1538.6" y="745.1" fill="#0a82d2">G-1</text>
<text x="1588.9" y="753.7" fill="#5a5a5a">HS-1</text>
<text x="1548.8" y="777.8" fill="#5a5a5a">A1</text>
<text x="1646.4" y="775.9" fill="#5a5a5a">HS-2</text>
<text x="1702.3" y="768.6" fill="#5a5a5a">HS-3</text>
<text x="1614.3" y="801.8" fill="#5a5a5a">HS-1</text>
<text x="430.2" y="667" fill="#5a5a5a">Q1</text>
<text x="460.2" y="713.3" fill="#5a5a5a">B3</text>
<text x="230.9" y="739.1" fill="#3c7c0c">A</text>
<text x="379.7" y="751.3" fill="#3c7c0c">A</text>
<text x="162.8" y="773.3" fill="#3c7c0c">HN-3</text>
<text x="195.9" y="796.3" fill="#3c7c0c">HN-2</text>
<text x="257.1" y="794.6" fill="#3c7c0c">HN-1L</text>
<text x="319.7" y="753.3" fill="#b41010">A3</text>
<text x="428" y="594" fill="#5a5a5a">Q</text>
<text x="1672" y="877.5" fill="#0a82d2">HM</text>
<text x="1778" y="468" fill="#a8a8a8">N</text>
</svg>
<div id="top">
  <!-- MENU icon -->
  <svg class="abs" style="left:0;top:0" width="24" height="22" viewBox="0 0 24 22">
    <rect x="2.500" y="3.500" width="19" height="7" fill="none" stroke="#fff" stroke-width="1.200"/>
    <path shape-rendering="crispEdges" d="M4 7.500 H7 M5.500 6 V9 M9 7.500 H12 M10.500 6 V9 M13 7.500 H16 M17 7.500 H20 M18.500 6 V9" stroke="#fff" stroke-width="1"/>
    <text y="18.500" font-size="7" font-weight="bold" fill="#fff" stroke="#fff" stroke-width="0.250" font-family="Liberation Sans,sans-serif"><tspan x="2.200" textLength="7.300" lengthAdjust="spacingAndGlyphs">ME</tspan><tspan x="13.900" textLength="8" lengthAdjust="spacingAndGlyphs">NU</tspan></text>
  </svg>
  <div class="abs" style="left:0;top:-1px;width:1px;height:23px;background:#8aa8a2"></div>
  <!-- VATSIM -->
  <div class="abs" style="left:24px;top:-1px;width:48px;height:23px;background:#125c50;border:1px solid #f08030"></div>
  <div class="abs" style="left:29px;top:3px;width:56px;height:16px;line-height:16px;font-size:15px;color:#fff;white-space:nowrap;transform-origin:0 50%;transform:scaleX(0.68)">VATSIM</div>
  <svg class="abs" style="left:24px;top:0" width="48" height="22" viewBox="0 0 48 22"><path d="M22 19 Q28 10 33 4" stroke="#fff" stroke-width="1.2" fill="none"/><circle cx="27" cy="12" r="2.600" fill="#8fb8b0" opacity="0.8"/></svg>
  <div class="t" style="left:74px;transform:scaleX(0.933)">LEMG_TWR [APP]</div>
  <!-- headset -->
  <div class="abs" style="left:213px;top:0;width:22px;height:21px;background:#125c50"></div>
  <svg class="abs" style="left:213px;top:0" width="24" height="22" viewBox="0 0 24 22">
    <path d="M3.500 10 V8.500 A5 5 0 0 1 13.500 8.500 V10" fill="none" stroke="#fff" stroke-width="1.400"/>
    <rect x="2" y="8" width="2.500" height="5" rx="1" fill="#fff"/><rect x="12.500" y="8" width="2.500" height="5" rx="1" fill="#fff"/>
    <path d="M14 13 Q13.500 16 8.500 16" fill="none" stroke="#fff" stroke-width="1.100"/>
    <text x="16" y="20.500" font-size="8" font-weight="bold" fill="#fff" font-family="DejaVu Sans,sans-serif">1</text>
  </svg>
  <div class="t" style="left:245px">118.155</div>
  <div class="t" style="left:306px">-</div>
  <div class="t" style="left:330px">-</div>
  <div class="t" style="left:354px">-</div>
  <div class="t" style="left:378px">-</div>
  <div class="sep" style="left:296px"></div><div class="sep" style="left:320px"></div><div class="sep" style="left:344px"></div><div class="sep" style="left:368px"></div><div class="sep" style="left:392px"></div>
  <div class="s2" style="left:393px;top:2px;width:23px">OPEN<b>SCT</b></div>
  <div class="sep" style="left:416px"></div>
  <div class="t" style="left:418px">LEMG_GND_GR</div>
  <div class="sep" style="left:555px"></div>
  <div class="t" style="left:562px">00:00:08</div>
  <div class="sep" style="left:615px"></div>
  <div class="s2" style="left:617px;top:2px;width:22px;font-size:7px">OTHER<b>SET</b></div>
  <div class="sep" style="left:639px"></div>
  <div class="s2" style="left:641px;top:2px;width:22px;font-size:7px">QUICK<b>SET</b></div>
  <div class="sep" style="left:664px"></div>
  <!-- icon parallelogram -->
  <svg class="abs" style="left:666px;top:0" width="22" height="22" viewBox="0 0 22 22">
    <path d="M8.500 2.500 H19.500 L14.500 13.500 H3.500 Z" fill="none" stroke="#fff" stroke-width="1.200"/>
    <path d="M4 14.500 H13 M5 16.500 H11 M5.500 18.500 H8 M6 20.500 H7" stroke="#fff" stroke-width="1" stroke-dasharray="1 1"/>
    <path d="M12.500 5 V6 M12 7.500 V8.500 M11 10.500 H13 M8 11.500 H10" stroke="#fff" stroke-width="1"/>
  </svg>
  <div class="sep" style="left:688px"></div>
  <svg class="abs" style="left:690px;top:0" width="22" height="22" viewBox="0 0 22 22">
    <rect x="0.500" y="15.500" width="5" height="5" fill="none" stroke="#fff"/>
    <path d="M8.500 12.500 L12 9 M14.500 6.500 L18 3" stroke="#fff" stroke-width="1"/>
  </svg>
  <div class="sep" style="left:712px"></div>
  <div class="t" style="left:727px">2</div>
  <div class="sep" style="left:742px"></div>
  <div class="abs mono" style="left:745px;top:5px;font-size:10px;line-height:12px;font-weight:bold;color:#fff">MIN</div>
  <div class="sep" style="left:766px"></div>
  <svg class="abs" style="left:768px;top:0" width="22" height="22" viewBox="0 0 22 22">
    <rect x="13.500" y="3.500" width="5" height="5" fill="none" stroke="#fff"/>
    <path d="M1 18.500 H2.500 M7 18.500 H8.500 M12 16.500 H13.500 M15 12.500 H16.500" stroke="#fff" stroke-width="1.500"/>
  </svg>
  <div class="sep" style="left:790px"></div>
  <div class="s2" style="left:792px;top:3px;width:22px;font-size:8px">STBY</div>
  <svg class="abs" style="left:792px;top:11px" width="22" height="10" viewBox="0 0 22 10">
    <rect x="1" y="4" width="2" height="2" fill="#fff"/>
    <path d="M5 5 H10 M8 2.500 L10.500 5 L8 7.500" fill="none" stroke="#fff" stroke-width="1.200"/>
    <rect x="13.500" y="2.500" width="5" height="5" fill="none" stroke="#fff"/>
  </svg>
  <div class="sep" style="left:814px"></div>
  <div class="abs" style="left:816px;top:2px;width:21px;font-size:9px;line-height:9px;text-align:center;color:#fff;font-family:'DejaVu Sans',sans-serif">FL<span style="display:block;border-top:1px solid #fff;margin:1px 2px 0 2px;padding-top:1px;line-height:8px">ALT</span></div>
  <div class="sep" style="left:838px"></div>
  <div class="t" style="left:846px">060</div>
  <div class="sep" style="left:873px"></div>
  <svg class="abs" style="left:875px;top:0" width="22" height="22" viewBox="0 0 22 22">
    <path d="M2 8.500 Q8 5.500 14 8.500 L9.500 14 V19 H6.500 V14 Z" fill="#fff"/>
    <ellipse cx="8" cy="9" rx="4.500" ry="1.200" fill="#6d8f88"/>
    <text x="12" y="7" font-size="6.500" fill="#fff" font-weight="bold" font-family="DejaVu Sans,sans-serif">FL</text>
  </svg>
  <div class="sep" style="left:897px"></div>
  <div class="t" style="left:920px;transform:scaleX(0.893)">GND-UNL</div>
  <div class="sep" style="left:997px"></div>
  <svg class="abs" style="left:999px;top:0" width="22" height="22" viewBox="0 0 22 22">
    <path d="M1.500 20 L4.500 15 L7.500 20 Z" fill="#fff"/>
    <path d="M5.500 15.500 L15 9.500" stroke="#f08030" stroke-width="1.200"/>
    <rect x="14.500" y="8" width="3" height="3" fill="#0b3f38" stroke="#fff"/>
    <path d="M16.500 12.500 V20" stroke="#fff" stroke-width="1" stroke-dasharray="2 2"/>
    <path d="M11 3 L16 7" stroke="#fff" stroke-width="1" stroke-dasharray="1 1.500"/>
  </svg>
  <div class="sep" style="left:1021px"></div>
  <svg class="abs" style="left:1023px;top:0" width="22" height="22" viewBox="0 0 22 22">
    <path d="M3 4 L8 6.500" stroke="#fff" stroke-width="1" stroke-dasharray="1 1.500"/>
    <rect x="8.500" y="6" width="3" height="3" fill="#0b3f38" stroke="#fff"/>
    <path d="M11.500 9.500 L17 15.500" stroke="#f08030" stroke-width="1.200"/>
    <path d="M17 16 L22 15" stroke="#f08030" stroke-width="1.200" stroke-dasharray="2 1.500"/>
    <rect x="7.500" y="17" width="3" height="3" fill="#0b3f38" stroke="#fff"/>
    <path d="M11 18.500 H16" stroke="#f08030" stroke-width="1.200"/>
    <path d="M1 18.500 H6" stroke="#fff" stroke-width="1" stroke-dasharray="1 2"/>
  </svg>
  <div class="sep" style="left:1045px"></div>
  <div class="t" style="left:1048px;transform:scaleX(0.917)">LEMG 182200Z 15003KT 9999 FEW016 SCT032 20/19 Q1020 NOSIG</div>
  <!-- window controls -->
  <div class="sep" style="left:1847px"></div><div class="sep" style="left:1871px"></div><div class="sep" style="left:1895px"></div>
  <svg class="abs" style="left:1845px;top:0" width="74" height="22" viewBox="0 0 74 22">
    <rect x="6" y="16" width="12" height="4" fill="#fff"/>
    <path d="M37 9.500 V5 H46 V13.500 H42.500" fill="none" stroke="#fff" stroke-width="1.800"/>
    <rect x="31.500" y="10.500" width="10.500" height="8" fill="none" stroke="#fff" stroke-width="1.800"/>
    <path d="M55 4 L70.500 19.500 M70.500 4 L55 19.500" stroke="#fff" stroke-width="1.900"/>
  </svg>
</div>
<div id="bar">
  <div class="abs" style="left:2px;top:2px;width:16px;height:17px;border:1px solid #7a7a7a;border-radius:3px"></div>
  <svg class="abs" style="left:3px;top:3px" width="14" height="15" viewBox="0 0 14 15">
    <circle cx="8.500" cy="6.500" r="3" fill="none" stroke="#fff" stroke-width="1.200"/>
    <path d="M6 9 L3.500 11.500 M6.500 8.500 L10.500 4.500" stroke="#fff" stroke-width="1.200"/>
  </svg>
  <div class="vs" style="left:20px"></div>
  <div class="m mono" style="left:28px">SETTINGS</div>
  <div class="m mono" style="left:88px">WINDOW</div>
  <div class="m mono" style="left:136px">FUNCTIONS</div>
  <div class="vs" style="left:197px"></div>
  <svg class="abs" style="left:203px;top:5px" width="12" height="12" viewBox="0 0 12 12">
    <path d="M6 1 L11 10.500 H1 Z" fill="none" stroke="#e01010" stroke-width="1.100"/>
    <path d="M6 4 V7.500 M6 8.500 V9.500" stroke="#fff" stroke-width="1"/>
  </svg>
  <div class="vs" style="left:221px"></div>
  <div class="m mono" style="left:224px">QNH:</div>
  <div class="abs" style="left:248px;top:3px;width:54px;height:16px;background:#6b6b6b;border-radius:4px"></div>
  <div class="abs mono" style="left:253px;top:4px;font-size:11px;line-height:16px;color:#e8e8e8;letter-spacing:1px">1020</div>
  <svg class="abs" style="left:290px;top:3px" width="12" height="16" viewBox="0 0 12 16">
    <rect x="1" y="0.500" width="10" height="15" rx="2" fill="#4a4a4a"/>
    <path d="M6 2.500 L9 6.500 H3 Z M6 13.500 L9 9.500 H3 Z" fill="#7d7d7d"/>
  </svg>
  <div class="vs" style="left:304px"></div>
  <div class="abs" style="left:308px;top:3px;width:64px;height:16px;background:#6b6b6b;border-radius:4px"></div>
  <div class="m mono" style="left:311px">NORMAL</div>
  <svg class="abs" style="left:361px;top:3px" width="12" height="16" viewBox="0 0 12 16">
    <rect x="0.500" y="0.500" width="11" height="15" rx="2" fill="#4a4a4a"/>
    <path d="M2.500 5.500 H9.500 L6 11.500 Z" fill="#fff"/>
  </svg>
  <div class="vs" style="left:374px"></div>
  <div class="gb" style="left:378px"><span>APM</span></div>
  <div class="gb" style="left:403px"><span>APW</span></div>
  <div class="gb" style="left:428px"><span>RIM</span></div>
  <div class="gb" style="left:453px"><span>CBM</span></div>
  <div class="gb" style="left:478px"><span>ICM</span></div>
  <div class="gb" style="left:503px"><span>OSM</span></div>
  <div class="gb" style="left:528px"><span>RVM</span></div>
  <div class="gb" style="left:553px"><span>ECM</span></div>
  <div class="gb" style="left:578px"><span>RUM</span></div>
  <div class="vs" style="left:1718px;height:18px;top:2px;border-right:0"></div>
  <div class="abs mono" style="left:1721px;top:4px;font-size:12px;line-height:15px;color:#f0f0f0;letter-spacing:0.800px">18-10-25 22:44:32</div>
  <div class="vs" style="left:1860px;height:18px;top:2px;border-right:0"></div>
  <div class="abs mono" style="left:1867px;top:4px;font-size:12px;line-height:15px;color:#2f7df0;letter-spacing:0.800px">HITT</div>
  <svg class="abs" style="left:1904px;top:6px" width="10" height="10" viewBox="0 0 10 10"><path d="M1.500 1.500 L8.500 8.500 M8.500 1.500 L1.500 8.500" stroke="#e0e0e0" stroke-width="1.100"/></svg>
</div>

<!-- Departure List -->
<div class="lst" style="left:-1px;top:43px;width:551px;height:28px">
  <div class="tb"><i style="left:0;width:11px;background:#137060">0</i><i style="left:12px;width:11px">F</i><i style="left:23px;width:11px">S</i><i class="ttl">Departure List</i>
    <svg class="abs" style="right:0;top:0" width="22" height="9" viewBox="0 0 22 9"><path d="M1.500 7 L5.500 2.500 L9.500 7 Z" fill="#fff"/><path d="M13 1 L20 8 M20 1 L13 8" stroke="#fff" stroke-width="1"/><path d="M11.500 0 V9" stroke="#0c1f1c"/></svg>
  </div>
  <div class="hd mono"><span style="left:2px">ACC</span><span style="left:25px">INDICATIV</span><span style="left:84px">A</span><span style="left:91px">N/TIPO</span><span style="left:133px">STND</span><span style="left:165px">EOBT</span><span style="left:197px">HOPM</span><span style="left:229px">DEST</span><span style="left:273px">SID</span><span style="left:317px">PD</span><span style="left:346px">CFL</span><span style="left:375px">INIT</span><span style="left:406.5px">CSSR</span><span style="left:439px">R</span><span style="left:480px">TXT</span><span style="left:533px">FP</span></div>
</div>

<!-- Sector Exit List -->
<div class="lst" style="left:1387px;top:45px;width:487px;height:28px">
  <div class="tb"><i style="left:0;width:11px;background:#137060">0</i><i style="left:12px;width:11px">F</i><i style="left:23px;width:11px">S</i><i class="ttl">Sector Exit List</i>
    <svg class="abs" style="right:0;top:0" width="22" height="9" viewBox="0 0 22 9"><path d="M1.500 7 L5.500 2.500 L9.500 7 Z" fill="#fff"/><path d="M13 1 L20 8 M20 1 L13 8" stroke="#fff" stroke-width="1"/><path d="M11.500 0 V9" stroke="#0c1f1c"/></svg>
  </div>
  <div class="hd mono"><span style="left:1px">INDICATIV</span><span style="left:60px">PSSR</span><span style="left:92px">ASSR</span><span style="left:127px">RFL</span><span style="left:156px">ADEP</span><span style="left:200px">SID</span><span style="left:247px">STAR</span><span style="left:285px">ARWY</span><span style="left:314px">ADES</span><span style="left:346px">XFL</span><span style="left:372px">STND</span><span style="left:410px">ACC</span><span style="left:439px">LND</span><span style="left:462px">COM</span></div>
</div>

<!-- Sector Inbound List -->
<div class="lst" style="left:1639px;top:261px;width:274px;height:28px">
  <div class="tb"><i style="left:0;width:11px;background:#137060">10</i><i style="left:12px;width:11px">F</i><i style="left:23px;width:11px">S</i><i class="ttl">Sector Inbound List</i>
    <svg class="abs" style="right:0;top:0" width="22" height="9" viewBox="0 0 22 9"><path d="M1.500 7 L5.500 2.500 L9.500 7 Z" fill="#fff"/><path d="M13 1 L20 8 M20 1 L13 8" stroke="#fff" stroke-width="1"/><path d="M11.500 0 V9" stroke="#0c1f1c"/></svg>
  </div>
  <div class="hd mono"><span style="left:1px">INDICATIV</span><span style="left:62.5px">DEST</span><span style="left:98px">ASSR</span><span style="left:130px">PSSR</span><span style="left:165px">XFL</span><span style="left:203px">STAR</span><span style="left:244px">HORA</span></div>
</div>

<!-- Metars -->
<div class="lst" style="left:0;top:450px;width:120px;height:11px;background:#0c463c">
  <div class="tb"><i style="left:0;width:11px;background:#137060">C</i><i class="ttl" style="left:11px;right:22px">Metars</i>
    <svg class="abs" style="right:0;top:0" width="22" height="9" viewBox="0 0 22 9"><path d="M1.500 7 L5.500 2.500 L9.500 7 Z" fill="#fff"/><path d="M13 1 L20 8 M20 1 L13 8" stroke="#fff" stroke-width="1"/><path d="M11.500 0 V9" stroke="#0c1f1c"/></svg>
  </div>
</div>
<div class="abs mono" style="left:0;top:462px;font-size:9.500px;line-height:13px;color:#74f04e;white-space:pre;letter-spacing:0.270px">A LEMG 15003KT Q1020</div>

<!-- FCATGSO toolbar -->
<div class="lst" style="left:1787px;top:492px;width:132px;height:11px;background:#0c463c">
  <div class="tb" style="height:9px"><i style="left:1px;width:10px;background:#137060">F</i><i style="left:12px;width:10px;background:#137060">C</i><i style="left:23px;width:10px;background:#137060">A</i><i style="left:34px;width:10px;background:#137060">T</i><i style="left:45px;width:10px;background:#137060">G</i><i style="left:56px;width:10px;background:#137060">S</i><i style="left:67px;width:10px;background:#137060">O</i><i style="left:78px;width:10px">*</i><i style="left:89px;width:10px">U</i>
    <svg class="abs" style="right:0;top:0" width="22" height="9" viewBox="0 0 22 9"><path d="M1.500 7 L5.500 2.500 L9.500 7 Z" fill="#fff"/><path d="M13 1 L20 8 M20 1 L13 8" stroke="#fff" stroke-width="1"/><path d="M11.500 0 V9" stroke="#0c1f1c"/></svg>
  </div>
</div>

<!-- INBOUND -->
<div class="pnl mono" style="left:0;top:565px;width:330px;height:31px;border:1px solid #9a9a9a;border-left:0">
  <div class="abs" style="left:0;top:14px;width:329px;height:1px;background:#9a9a9a"></div>
  <div class="abs" style="left:1px;top:15px;width:1px;height:14px;background:#d0d0d0"></div>
  <div class="abs" style="left:6px;top:-1px;line-height:15px">12 INBOUND</div>
  <svg class="abs" style="left:316px;top:2px" width="10" height="10" viewBox="0 0 10 10"><rect x="0.500" y="0.500" width="9" height="9" fill="none" stroke="#e6e6e6"/><path d="M1 1 L9 9 M9 1 L1 9" stroke="#e6e6e6"/></svg>
  <div class="abs" style="left:6px;top:14px;line-height:15px">TTT</div>
  <div class="abs" style="left:53px;top:14px;line-height:15px">C/S</div>
  <div class="abs" style="left:149px;top:14px;line-height:15px">DTT TYPE W ETA</div>
  <div class="abs" style="left:285px;top:14px;line-height:15px">STAND</div>
</div>

<!-- OUTBOUND -->
<div class="pnl mono" style="left:1733px;top:565px;width:186px;height:31px;border:1px solid #9a9a9a;border-right:0">
  <div class="abs" style="left:0;top:14px;width:186px;height:1px;background:#9a9a9a"></div>
  <div class="abs" style="left:1px;top:15px;width:1px;height:14px;background:#d0d0d0"></div>
  <div class="abs" style="left:5px;top:-1px;line-height:15px">13 OUTBOUND</div>
  <svg class="abs" style="left:172px;top:2px" width="10" height="10" viewBox="0 0 10 10"><rect x="0.500" y="0.500" width="9" height="9" fill="none" stroke="#e6e6e6"/><path d="M1 1 L9 9 M9 1 L1 9" stroke="#e6e6e6"/></svg>
  <div class="abs" style="left:5px;top:14px;line-height:15px">DT</div>
  <div class="abs" style="left:52px;top:14px;line-height:15px">C/S</div>
  <div class="abs" style="left:140px;top:14px;line-height:15px">W SID</div>
</div>

<!-- Clock -->
<div class="abs" style="left:0;top:708px;width:149px;height:65px;background:#222"></div>
<div class="abs" style="left:0;top:708px;width:99px;height:15px;background:#b5517e"></div>
<div class="abs" style="left:119px;top:708px;width:30px;height:15px;background:#b5517e"></div>
<div class="abs lmono" style="left:3px;top:733px;font-size:30px;line-height:36px;color:#ff8c0a;-webkit-text-stroke:0.7px #ff8c0a;letter-spacing:-0.900px;white-space:pre">22:44:32</div>

<!-- bottom-left messages -->
<div class="abs mono" style="left:5px;top:907px;font-size:9px;letter-spacing:0.600px;line-height:11px;color:#00dce6;white-space:pre">GRplugin
<span style="color:#f0f0f0">118.155</span>
VFPC
<span style="color:#f0f0f0">118.455</span>
server
CDM Plugin
vSACTA
<span style="color:#f0f0f0">CCAMS</span>
<span style="color:#f0f0f0">Message</span></div>

<!-- APP window -->
<div class="abs" style="left:1252px;top:363px;width:360px;height:230px;border:1px solid #c4c4c4;background:#000"></div>
<div class="abs" style="left:1253px;top:364px;width:358px;height:14px;background:#555;border-bottom:1px solid #c4c4c4"></div>
<div class="abs mono" style="left:1257px;top:363px;font-size:12.5px;line-height:15px;color:#ececec;letter-spacing:0.9px">APP</div>
<svg class="abs" style="left:1598px;top:365px" width="12" height="12" viewBox="0 0 12 12"><rect x="1.500" y="1.500" width="9" height="9" fill="none" stroke="#e6e6e6"/><path d="M2 2 L10 10 M10 2 L2 10" stroke="#e6e6e6"/></svg>
<div class="abs" style="left:1598px;top:579px;width:13px;height:13px;background:#585858;border-top:1px solid #9a9a9a;border-left:1px solid #9a9a9a"></div>

<!-- bottom-right -->
<div class="abs" style="left:1604px;top:946px;width:315px;height:32px;background:#595959"></div>
<div class="abs" style="left:1606px;top:948px;width:51px;height:27px;border:1px solid #7a7a7a"></div>
<div class="abs" style="left:1658px;top:948px;width:67px;height:27px;border:1px solid #7a7a7a"></div>
<div class="abs" style="left:1726px;top:948px;width:84px;height:27px;border:1px solid #7a7a7a"></div>
<div class="abs" style="left:1811px;top:948px;width:64px;height:27px;border:1px solid #7a7a7a"></div>
<div class="abs" style="left:1876px;top:948px;width:42px;height:27px;border:1px solid #7a7a7a"></div>
<div class="abs lmono" style="left:1611px;top:955px;font-size:13px;line-height:16px;color:#e6e6e6;font-family:'Liberation Mono',monospace;transform-origin:0 0;transform:scaleX(1.150)">N/A</div>
<div class="abs lmono" style="left:1663px;top:955px;font-size:13px;line-height:16px;color:#e6e6e6;transform-origin:0 0;transform:scaleX(1.150)">ATIS ?</div>
<div class="abs lmono" style="left:1729px;top:955px;font-size:13px;line-height:16px;color:#10c010;transform-origin:0 0;transform:scaleX(1.150)">N/A</div>
<div class="abs lmono" style="left:1816px;top:955px;font-size:13px;line-height:16px;color:#e6e6e6;transform-origin:0 0;transform:scaleX(1.150)">N/A</div>
<div class="abs lmono" style="left:1886px;top:950px;font-size:10px;line-height:12px;color:#e6e6e6;transform-origin:0 0;transform:scaleX(1.150);white-space:pre">N/A
N/A</div>
<div class="abs" style="left:1607px;top:979px;width:312px;height:14px;background:#000"></div>
<div class="abs" style="left:1607px;top:979px;width:152px;height:14px;border:1px solid #0f4a41;background:#12302b"></div>
<div class="abs mono" style="left:1609px;top:981px;width:48px;height:10px;background:#4a5a57;font-size:8.500px;letter-spacing:0.450px;line-height:11px;color:#e6e6e6;white-space:pre">NO CALL</div>
<div class="abs mono" style="left:1659px;top:981px;width:48px;height:10px;background:#c8e8e0;font-size:8.500px;letter-spacing:0.450px;line-height:11px;color:#555;white-space:pre">LINE 1</div>
<div class="abs mono" style="left:1709px;top:981px;width:48px;height:10px;background:#c8e8e0;font-size:8.500px;letter-spacing:0.450px;line-height:11px;color:#555;white-space:pre">LINE 2</div>
<div class="abs" style="left:1784px;top:985px;width:135px;height:21px;background:#565656"></div>
<div class="abs lmono" style="left:1787px;top:988px;font-size:13px;line-height:16px;color:#e6e6e6;transform-origin:0 0;transform:scaleX(1.270);white-space:pre">CONFIGURACIÓN</div>
<svg class="abs" style="left:0;top:0" width="1919" height="1009" viewBox="0 0 1919 1009" shape-rendering="crispEdges" fill="none">
<polyline points="1430.3,385.1 1430.3,389.3 1570.4,389.3 1570.4,385.1" stroke="#7a7a7a"/>
<polyline points="1500.3,385.1 1500.3,389.3" stroke="#7a7a7a"/>
<polyline points="1565.8,412.4 1555.6,401.5 1555.6,406.3" stroke="#7a7a7a"/>
<polyline points="1555.6,401.5 1560.4,402" stroke="#7a7a7a"/>
<polyline points="1500.7,378.3 1489.1,388.9 1471.7,397.6 1458.2,407.2 1452.4,415.9 1450.5,425.6 1448.6,433.3 1454.4,450.6 1459.8,468 1458.2,479.5 1460.2,495 1465,518.1 1469.8,533.5 1467.5,552.5 1465,565 1457.5,571.3 1450,580 1445,590" stroke="#3e3e3e"/>
<polyline points="1448.6,419.8 1450.5,426.5 1452.4,421.7" stroke="#3e3e3e"/>
<circle cx="1432.3" cy="485.3" r="60.2" stroke="#3e3e3e" stroke-dasharray="4 3" shape-rendering="auto" stroke-width="0.9"/>
<line x1="1419.7" y1="479.5" x2="1284.7" y2="515.8" stroke="#3e3e3e"/>
<line x1="1406.3" y1="485.0" x2="1405.3" y2="481.5" stroke="#3e3e3e"/>
<line x1="1392.2" y1="488.8" x2="1391.3" y2="485.3" stroke="#3e3e3e"/>
<line x1="1378.7" y1="492.4" x2="1377.8" y2="488.9" stroke="#3e3e3e"/>
<line x1="1365.6" y1="495.9" x2="1364.7" y2="492.4" stroke="#3e3e3e"/>
<line x1="1352.8" y1="502.2" x2="1350.5" y2="493.5" stroke="#3e3e3e"/>
<line x1="1338.2" y1="503.3" x2="1337.3" y2="499.8" stroke="#3e3e3e"/>
<line x1="1325.3" y1="506.8" x2="1324.3" y2="503.3" stroke="#3e3e3e"/>
<line x1="1311.8" y1="510.4" x2="1310.8" y2="506.9" stroke="#3e3e3e"/>
<line x1="1298.3" y1="514.0" x2="1297.3" y2="510.5" stroke="#3e3e3e"/>
<line x1="1285.9" y1="520.1" x2="1283.5" y2="511.5" stroke="#3e3e3e"/>
<line x1="1419.7" y1="479.0" x2="1439.9" y2="474.1" stroke="#cc6a00" stroke-width="2.6"/>
<line x1="1439.9" y1="474.1" x2="1442.8" y2="473.4" stroke="#ddd" stroke-width="1"/>
<line x1="1420.1" y1="484.9" x2="1444.7" y2="484.9" stroke="#2f7400" stroke-width="1.6"/>
<line x1="1410" y1="589.8" x2="1597" y2="586.4" stroke="#3e3e3e" stroke-dasharray="18 6"/>
<text x="1425" y="463.7" fill="#f4f4a8" font-size="8.3" style="font-family:DejaVu Sans Mono,Liberation Mono,monospace">EA</text>
<text x="1428.4" y="503.6" fill="#f4f4a8" font-size="8.3" style="font-family:DejaVu Sans Mono,Liberation Mono,monospace">WA</text>
<text x="1461" y="420.7" fill="#f4f4a8" font-size="8.3" style="font-family:DejaVu Sans Mono,Liberation Mono,monospace">PE1</text>
<text x="1453.3" y="549.9" fill="#f4f4a8" font-size="8.3" style="font-family:DejaVu Sans Mono,Liberation Mono,monospace">PW1</text>
<text x="1575.8" y="393.7" fill="#777" font-size="12.5" style="font-family:DejaVu Sans Mono,Liberation Mono,monospace;letter-spacing:0.4px">10nm</text>
<text x="1575.8" y="411.7" fill="#777" font-size="12.5" style="font-family:DejaVu Sans Mono,Liberation Mono,monospace">N</text>
</svg>
</body>
</html>
